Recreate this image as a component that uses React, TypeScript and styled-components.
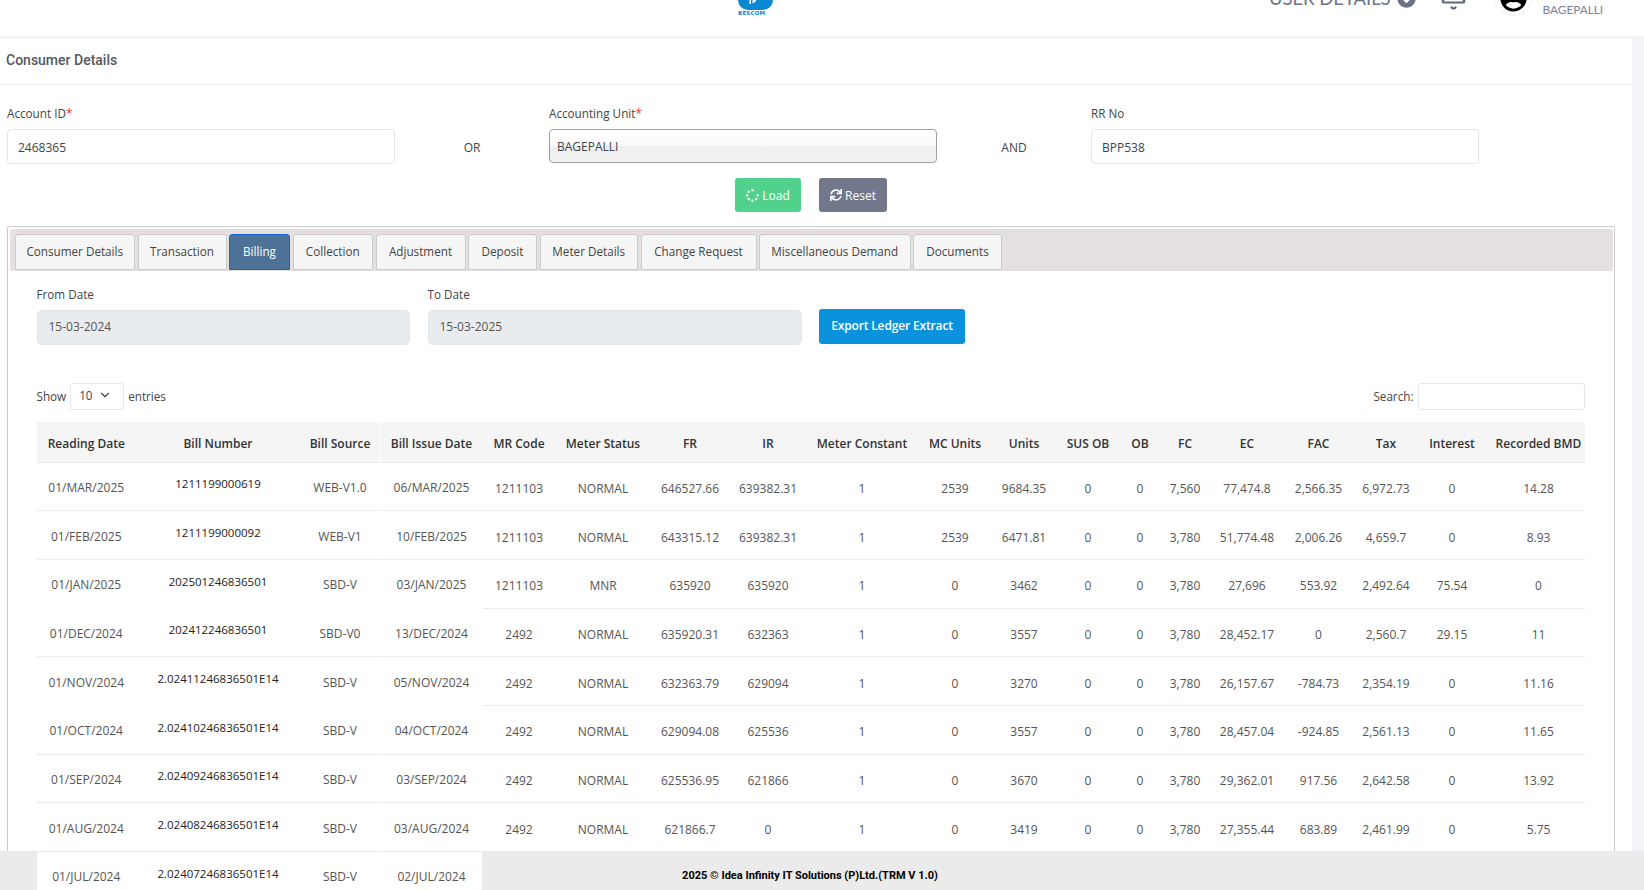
import React from "react";
import styled, { createGlobalStyle } from "styled-components";
import { FaChevronCircleDown, FaSpinner, FaSync, FaUserCircle } from "react-icons/fa";
import { Bell, ChevronDown } from "lucide-react";

const GlobalStyle = createGlobalStyle`
  html, body {
    margin: 0;
    height: 100vh;
    overflow: hidden;
    background: #f3f3f8;
    font-family: "Open Sans", "Noto Sans", sans-serif;
    font-size: 12px;
    color: #555;
  }
  * { box-sizing: border-box; }
`;

const Header = styled.header`
  height: 36px;
  background: #fff;
  display: flex;
  align-items: flex-end;
  overflow: hidden;
`;

const LogoBlock = styled.div`
  margin-left: 738px;
  margin-bottom: 20px;
  width: 35px;
  display: flex;
  flex-direction: column;
  flex-shrink: 0;
`;

const LogoText = styled.span`
  font-family: "DejaVu Sans", sans-serif;
  font-size: 5.5px;
  line-height: 5px;
  font-weight: 700;
  letter-spacing: 0.2px;
  color: #0b87d2;
  margin-top: 1px;
`;

const UserDetails = styled.div`
  margin-left: 496px;
  margin-bottom: 26px;
  display: flex;
  align-items: center;
  gap: 6px;
  font-family: "Lato", sans-serif;
  font-size: 18.4px;
  line-height: 24px;
  white-space: nowrap;
  color: #6c7388;
  flex-shrink: 0;
`;

const BellSlot = styled.div`
  margin-left: 23px;
  margin-bottom: 25px;
  color: #5f6579;
  flex-shrink: 0;
  display: flex;
`;

const Avatar = styled.div`
  margin-left: 25.5px;
  margin-bottom: 20px;
  width: 40px;
  height: 40px;
  border-radius: 50%;
  background: #fff;
  border: 1px solid #f0f0f3;
  padding-bottom: 3px;
  display: flex;
  align-items: flex-end;
  justify-content: center;
  color: #000;
  flex-shrink: 0;
`;

const UserUnit = styled.div`
  margin-left: 9.5px;
  margin-bottom: 18px;
  font-family: "Lato", sans-serif;
  font-size: 11.8px;
  line-height: 16px;
  color: #7d819c;
`;

const Card = styled.main`
  margin-top: 3px;
  width: 1632px;
  background: #fff;
  border-top-right-radius: 4px;
  padding-bottom: 40px;
`;

const CardTitle = styled.h1`
  margin: 0;
  height: 46px;
  padding: 0 0 3px 6px;
  display: flex;
  align-items: center;
  font-family: "Roboto", sans-serif;
  font-size: 14px;
  font-weight: 500;
  color: #535961;
  border-bottom: 1px solid #eceef1;
`;

const SearchGrid = styled.div`
  display: grid;
  grid-template-columns: 388px 154px 388px 154px 388px;
  padding: 20px 0 0 7px;
  align-items: start;
`;

const Field = styled.div`
  display: flex;
  flex-direction: column;
`;

const Label = styled.label`
  font-size: 11.7px;
  line-height: 16px;
  margin-bottom: 8px;
  color: #444;
`;

const Required = styled.span`
  color: #e33;
`;

const Joiner = styled.div`
  height: 35px;
  margin-top: 24px;
  padding-top: 2px;
  display: flex;
  align-items: center;
  justify-content: center;
  color: #444;
`;

const TextBox = styled.div`
  height: 35px;
  border: 1px solid #e4e6eb;
  border-radius: 4px;
  background: #fff;
  padding: 2px 0 0 10px;
  display: flex;
  align-items: center;
  color: #444;
`;

const UnitSelect = styled.div`
  height: 34px;
  border: 1px solid #a0a0a0;
  border-radius: 4px;
  background: linear-gradient(#fff 0%, #fafafa 48%, #efefef 52%, #f2f2f2 100%);
  padding-left: 7px;
  display: flex;
  align-items: center;
  color: #444;
`;

const ButtonRow = styled.div`
  margin-top: 14px;
  padding-right: 10px;
  display: flex;
  justify-content: center;
  gap: 18px;
`;

const ActionButton = styled.button<{ $bg: string; $width: number }>`
  height: 34px;
  width: ${(p) => p.$width}px;
  border: none;
  border-radius: 3px;
  background: ${(p) => p.$bg};
  color: #fff;
  font-family: inherit;
  font-size: 12px;
  display: flex;
  align-items: center;
  justify-content: center;
  gap: 3px;
  padding: 0;
`;

const TabBox = styled.section`
  margin: 14px 0 0 7px;
  width: 1608px;
  border: 1.5px solid #ccc;
  border-radius: 2px;
  padding: 1.5px;
`;

const TabBar = styled.nav`
  height: 42px;
  background: #e3e0df;
  border-radius: 3px;
  display: flex;
  align-items: flex-end;
  gap: 2.5px;
  padding: 0 0 1px 5px;
`;

const Tab = styled.div<{ $active?: boolean; $width: number }>`
  height: 36px;
  width: ${(p) => p.$width}px;
  border: 1px solid ${(p) => (p.$active ? "#1766d6" : "#ccc")};
  border-radius: 3px 3px 0 0;
  background: ${(p) => (p.$active ? "#4e7297" : "#f5f5f5")};
  color: ${(p) => (p.$active ? "#fff" : "#444")};
  font-size: 11.7px;
  padding-bottom: 2px;
  display: flex;
  align-items: center;
  justify-content: center;
  white-space: nowrap;
`;

const TabBody = styled.div`
  padding: 15px 0 0 27px;
`;

const DateRow = styled.div`
  display: grid;
  grid-template-columns: 373.5px 374px 146px;
  column-gap: 17.5px;
  align-items: end;
`;

const DateBox = styled.div`
  height: 35px;
  border: 1px solid #e1e4e8;
  border-radius: 5px;
  background: #e9ecef;
  padding: 0 0 2px 11px;
  display: flex;
  align-items: center;
  color: #555;
`;

const ExportButton = styled.button`
  height: 35px;
  margin-bottom: 1px;
  border: none;
  border-radius: 3px;
  background: #0a93dc;
  color: #fff;
  font-family: inherit;
  font-size: 12px;
  font-weight: 600;
  letter-spacing: -0.15px;
  padding: 0 0 2px;
`;

const TableTools = styled.div`
  margin-top: 38px;
  width: 1548px;
  height: 27px;
  display: flex;
  align-items: center;
  justify-content: space-between;
  font-size: 11.7px;
  color: #444;
`;

const ToolGroup = styled.div`
  display: flex;
  align-items: center;
  gap: 4px;
`;

const PageSize = styled.div`
  width: 54px;
  height: 27px;
  border: 1px solid #e6e7ea;
  border-radius: 3px;
  background: #fff;
  padding: 0 11px 2px 8px;
  display: flex;
  align-items: center;
  justify-content: space-between;
  color: #444;
`;

const SearchBox = styled.div`
  width: 167px;
  height: 27px;
  border: 1px solid #e6e7ea;
  border-radius: 3px;
  background: #fff;
`;

const TableClip = styled.div`
  margin-top: 12px;
  width: 1548px;
  overflow: hidden;
`;

const Table = styled.table`
  width: 1555.5px;
  table-layout: fixed;
  border-collapse: separate;
  border-spacing: 0;
`;

const HeadCell = styled.th<{ $pinned?: boolean; $gap?: boolean }>`
  height: 41px;
  padding: 4px 0 0;
  background: #f5f5f5;
  border-bottom: 1px solid #ececec;
  border-left: ${(p) => (p.$gap ? "1px solid #fff" : "none")};
  font-size: 12px;
  font-weight: 600;
  color: #333;
  text-align: center;
  white-space: nowrap;
  position: ${(p) => (p.$pinned ? "relative" : "static")};
  z-index: ${(p) => (p.$pinned ? 2 : "auto")};
`;

const BodyRow = styled.tr`
  height: 48.7px;
`;

const cellPadding = (pinned?: boolean, raised?: boolean) => {
  if (raised) return "0 0 5px";
  return pinned ? "2px 0 0" : "4px 0 0";
};

const BodyCell = styled.td<{ $pinned?: boolean; $gap?: boolean; $raised?: boolean; $noLine?: boolean }>`
  padding: ${(p) => cellPadding(p.$pinned, p.$raised)};
  background: #fff;
  border-bottom: 1px solid ${(p) => (p.$noLine ? "#fff" : "#ececec")};
  border-left: ${(p) => (p.$gap ? "1px solid #fff" : "none")};
  color: ${(p) => (p.$raised ? "#222" : "#555")};
  font-size: ${(p) => (p.$raised ? "11.5px" : "12px")};
  text-align: center;
  white-space: nowrap;
  position: ${(p) => (p.$pinned ? "relative" : "static")};
  z-index: ${(p) => (p.$pinned ? 2 : "auto")};
`;

const Footer = styled.footer`
  position: fixed;
  left: 0;
  right: 0;
  bottom: 0;
  height: 39px;
  background: #ebebeb;
  z-index: 1;
  padding: 18px 24px 0 0;
  display: flex;
  justify-content: center;
  font-family: "Roboto", sans-serif;
  font-size: 11px;
  line-height: 14px;
  font-weight: 700;
  color: #000;
`;

const TABS = [
  { label: "Consumer Details", width: 120.5 },
  { label: "Transaction", width: 89 },
  { label: "Billing", width: 61, active: true },
  { label: "Collection", width: 80.5 },
  { label: "Adjustment", width: 90 },
  { label: "Deposit", width: 69 },
  { label: "Meter Details", width: 98.5 },
  { label: "Change Request", width: 116 },
  { label: "Miscellaneous Demand", width: 151.5 },
  { label: "Documents", width: 89 },
];

const COLUMNS = [
  { name: "Reading Date", width: 99.5 },
  { name: "Bill Number", width: 164 },
  { name: "Bill Source", width: 80 },
  { name: "Bill Issue Date", width: 102 },
  { name: "MR Code", width: 74 },
  { name: "Meter Status", width: 94 },
  { name: "FR", width: 80 },
  { name: "IR", width: 76 },
  { name: "Meter Constant", width: 112 },
  { name: "MC Units", width: 74 },
  { name: "Units", width: 64 },
  { name: "SUS OB", width: 64 },
  { name: "OB", width: 40 },
  { name: "FC", width: 50 },
  { name: "EC", width: 74 },
  { name: "FAC", width: 69 },
  { name: "Tax", width: 66 },
  { name: "Interest", width: 66 },
  { name: "Recorded BMD", width: 107 },
];

const ROWS = [
  "01/MAR/2025|1211199000619|WEB-V1.0|06/MAR/2025|1211103|NORMAL|646527.66|639382.31|1|2539|9684.35|0|0|7,560|77,474.8|2,566.35|6,972.73|0|14.28",
  "01/FEB/2025|1211199000092|WEB-V1|10/FEB/2025|1211103|NORMAL|643315.12|639382.31|1|2539|6471.81|0|0|3,780|51,774.48|2,006.26|4,659.7|0|8.93",
  "01/JAN/2025|202501246836501|SBD-V|03/JAN/2025|1211103|MNR|635920|635920|1|0|3462|0|0|3,780|27,696|553.92|2,492.64|75.54|0",
  "01/DEC/2024|202412246836501|SBD-V0|13/DEC/2024|2492|NORMAL|635920.31|632363|1|0|3557|0|0|3,780|28,452.17|0|2,560.7|29.15|11",
  "01/NOV/2024|2.02411246836501E14|SBD-V|05/NOV/2024|2492|NORMAL|632363.79|629094|1|0|3270|0|0|3,780|26,157.67|-784.73|2,354.19|0|11.16",
  "01/OCT/2024|2.02410246836501E14|SBD-V|04/OCT/2024|2492|NORMAL|629094.08|625536|1|0|3557|0|0|3,780|28,457.04|-924.85|2,561.13|0|11.65",
  "01/SEP/2024|2.02409246836501E14|SBD-V|03/SEP/2024|2492|NORMAL|625536.95|621866|1|0|3670|0|0|3,780|29,362.01|917.56|2,642.58|0|13.92",
  "01/AUG/2024|2.02408246836501E14|SBD-V|03/AUG/2024|2492|NORMAL|621866.7|0|1|0|3419|0|0|3,780|27,355.44|683.89|2,461.99|0|5.75",
  // only the pinned columns of this row show above the footer
  "01/JUL/2024|2.02407246836501E14|SBD-V|02/JUL/2024|||||||||||||||",
].map((row) => row.split("|"));

const UNLINED_ROWS = [2, 4];
const PINNED = 4;

const Logo = () => (
  <svg width="35" height="18" viewBox="0 0 35 18">
    <path d="M0 0h35v8a10 10 0 0 1-10 10H10A10 10 0 0 1 0 8z" fill="#0b87d2" />
    <path d="M11.5 0H13v12h-1.5z" fill="#fff" />
    <path d="M14.5 0H20c0 6-2 10.500-5.500 11.500z" fill="#fff" />
  </svg>
);

export default function App() {
  return (
    <>
      <GlobalStyle />
      <Header>
        <LogoBlock>
          <Logo />
          <LogoText>BESCOM</LogoText>
        </LogoBlock>
        <UserDetails>
          USER DETAILS <FaChevronCircleDown size={19} />
        </UserDetails>
        <BellSlot>
          <Bell size={29} strokeWidth={1.7} />
        </BellSlot>
        <Avatar>
          <FaUserCircle size={27} />
        </Avatar>
        <UserUnit>BAGEPALLI</UserUnit>
      </Header>

      <Card>
        <CardTitle>Consumer Details</CardTitle>
        <SearchGrid>
          <Field>
            <Label>
              Account ID<Required>*</Required>
            </Label>
            <TextBox>2468365</TextBox>
          </Field>
          <Joiner>OR</Joiner>
          <Field>
            <Label>
              Accounting Unit<Required>*</Required>
            </Label>
            <UnitSelect>BAGEPALLI</UnitSelect>
          </Field>
          <Joiner>AND</Joiner>
          <Field>
            <Label>RR No</Label>
            <TextBox>BPP538</TextBox>
          </Field>
        </SearchGrid>

        <ButtonRow>
          <ActionButton $bg="#52d18c" $width={66}>
            <FaSpinner size={13} /> Load
          </ActionButton>
          <ActionButton $bg="#73778b" $width={68}>
            <FaSync size={12} /> Reset
          </ActionButton>
        </ButtonRow>

        <TabBox>
          <TabBar>
            {TABS.map((tab) => (
              <Tab key={tab.label} $active={tab.active} $width={tab.width}>
                {tab.label}
              </Tab>
            ))}
          </TabBar>

          <TabBody>
            <DateRow>
              <Field>
                <Label>From Date</Label>
                <DateBox>15-03-2024</DateBox>
              </Field>
              <Field>
                <Label>To Date</Label>
                <DateBox>15-03-2025</DateBox>
              </Field>
              <ExportButton>Export Ledger Extract</ExportButton>
            </DateRow>

            <TableTools>
              <ToolGroup>
                Show
                <PageSize>
                  10 <ChevronDown size={14} />
                </PageSize>
                entries
              </ToolGroup>
              <ToolGroup>
                Search:
                <SearchBox />
              </ToolGroup>
            </TableTools>

            <TableClip>
              <Table>
                <colgroup>
                  {COLUMNS.map((col) => (
                    <col key={col.name} width={col.width} />
                  ))}
                </colgroup>
                <thead>
                  <tr>
                    {COLUMNS.map((col, i) => (
                      <HeadCell key={col.name} $pinned={i < PINNED} $gap={i === 3}>
                        {col.name}
                      </HeadCell>
                    ))}
                  </tr>
                </thead>
                <tbody>
                  {ROWS.map((row, r) => (
                    <BodyRow key={row[0]}>
                      {row.map((value, i) => (
                        <BodyCell
                          key={i}
                          $pinned={i < PINNED}
                          $gap={i === 3}
                          $raised={i === 1}
                          $noLine={i < PINNED && UNLINED_ROWS.includes(r)}
                        >
                          {value}
                        </BodyCell>
                      ))}
                    </BodyRow>
                  ))}
                </tbody>
              </Table>
            </TableClip>
          </TabBody>
        </TabBox>
      </Card>

      <Footer>2025 © Idea Infinity IT Solutions (P)Ltd.(TRM V 1.0)</Footer>
    </>
  );
}
